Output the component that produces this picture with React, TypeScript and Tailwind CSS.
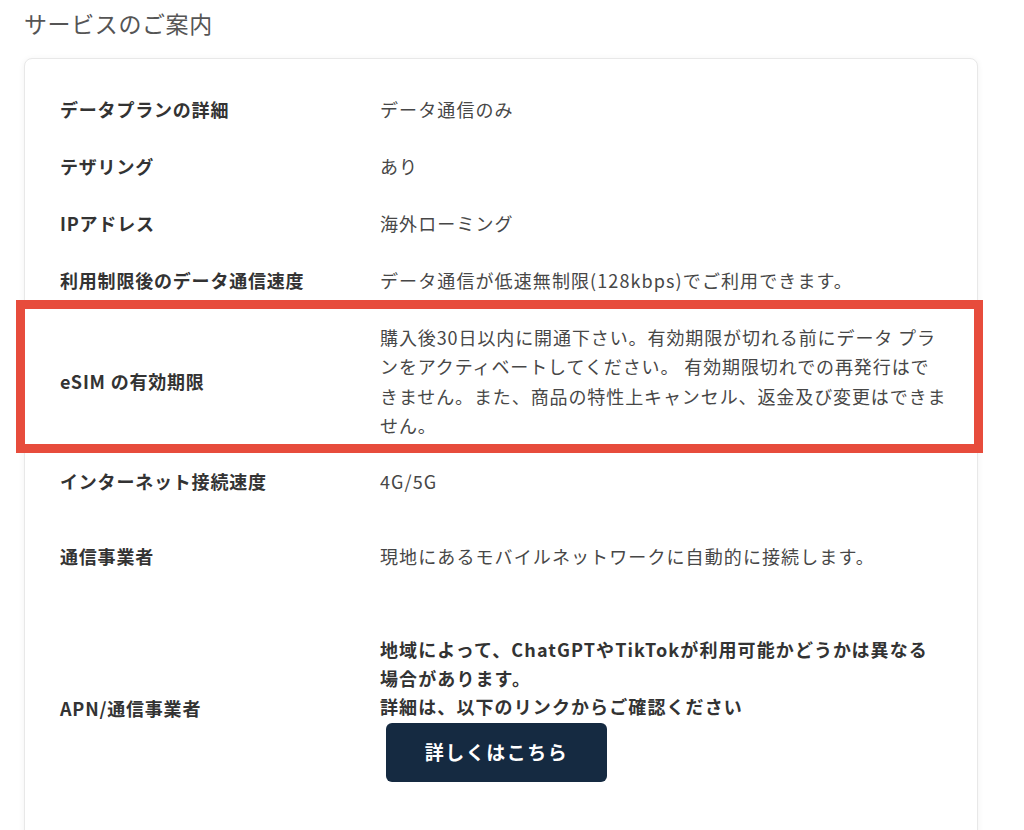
type Row = {
  label: string;
  value: string;
  height: string;
};

const rows: Row[] = [
  { label: "データプランの詳細", value: "データ通信のみ", height: "h-[57px]" },
  { label: "テザリング", value: "あり", height: "h-[57px]" },
  { label: "IPアドレス", value: "海外ローミング", height: "h-[57px]" },
  {
    label: "利用制限後のデータ通信速度",
    value: "データ通信が低速無制限(128kbps)でご利用できます。",
    height: "h-[57px]",
  },
];

function InfoRow({ label, value, height }: Row) {
  return (
    <div className={`flex items-center pl-[35px] pr-[20px] ${height}`}>
      <div className="w-[320px] shrink-0 font-bold tracking-[0.8px] text-[#333]">{label}</div>
      <div className="w-[566px] tracking-[1.1px] text-[#474747]">{value}</div>
    </div>
  );
}

export default function App() {
  return (
    <div className="min-h-[830px] bg-white px-6 pt-[6px] font-['Noto_Sans_CJK_JP','Noto_Sans',sans-serif] text-[18px]">
      <h2 className="text-[23px] leading-[34px] tracking-[0.6px] text-[#555]">
        サービスのご案内
      </h2>

      <div className="mt-[18px] w-[954px] rounded-lg border border-[#e8e8e8] bg-white pt-[22px] pb-16 shadow-[0_1px_6px_rgba(0,0,0,0.06)]">
        {rows.map((row) => (
          <InfoRow key={row.label} {...row} />
        ))}

        {/* highlighted row */}
        <div className="relative flex h-[145px] items-center pl-[35px] pr-[20px]">
          <div className="w-[320px] shrink-0 font-bold tracking-[0.8px] text-[#333]">
            eSIM の有効期限
          </div>
          <div className="whitespace-nowrap leading-[29.5px] tracking-[0.9px] text-[#474747]">
            購入後30日以内に開通下さい。有効期限が切れる前にデータ プラ
            <br />
            ンをアクティベートしてください。 有効期限切れでの再発行はで
            <br />
            きません。また、商品の特性上キャンセル、返金及び変更はできま
            <br />
            せん。
          </div>
          <div className="pointer-events-none absolute -top-[9px] -left-[9px] -right-[6px] bottom-[1px] border-[9px] border-[#e74c3c]" />
        </div>

        <InfoRow label="インターネット接続速度" value="4G/5G" height="h-[54px]" />
        <InfoRow
          label="通信事業者"
          value="現地にあるモバイルネットワークに自動的に接続します。"
          height="h-[96px]"
        />

        <div className="flex items-center pl-[35px] pr-[20px] pt-[31px]">
          <div className="w-[320px] shrink-0 font-bold tracking-[0.8px] text-[#333]">
            APN/通信事業者
          </div>
          <div>
            <p className="whitespace-nowrap font-bold leading-[28.5px] tracking-[1.1px] text-[#333]">
              地域によって、ChatGPTやTikTokが利用可能かどうかは異なる
              <br />
              場合があります。
              <br />
              詳細は、以下のリンクからご確認ください
            </p>
            <button className="mt-[2.5px] ml-[6px] h-[59px] w-[221px] rounded-md bg-[#152a41] text-[19px] font-bold tracking-[1.5px] text-white">
              詳しくはこちら
            </button>
          </div>
        </div>
      </div>
    </div>
  );
}
